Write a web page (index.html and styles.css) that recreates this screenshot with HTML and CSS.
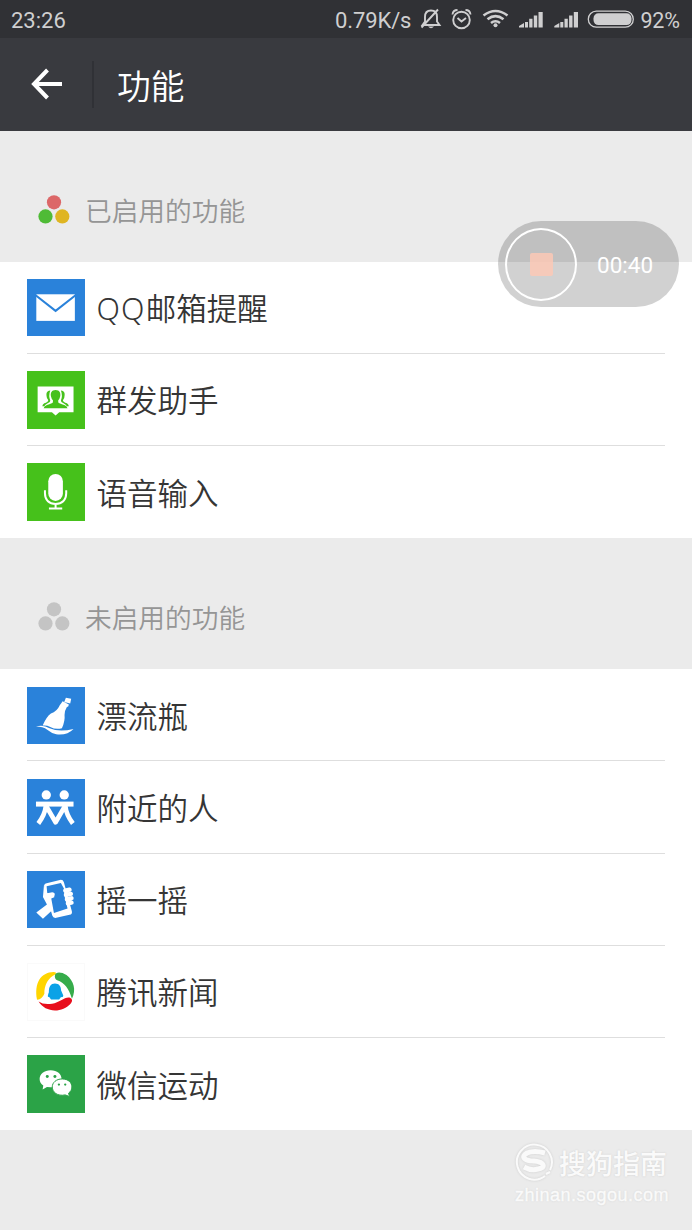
FILE: index.html
```html
<!DOCTYPE html>
<html lang="zh-CN">
<head>
<meta charset="utf-8">
<meta name="viewport" content="width=device-width">
<title>功能</title>
<link rel="stylesheet" href="styles.css">
</head>
<body>
<div class="screen">
  <div class="status-bar">
    <span class="clock">23:26</span>
    <span class="speed">0.79K/s</span>
    <svg class="status-icons" width="218" height="38" viewBox="0 0 218 38" fill="none" stroke="#cfcfd0" stroke-width="1.9">
      <path d="M9 24.500V17Q9 10.500 15 10.500T21 17V21.500L23.500 25H6.500L9 21.500M5.500 27.500L22 9.500"/>
      <path d="M12 26.500H18Q15 30 12 26.500Z" fill="#cfcfd0" stroke="none"/>
      <circle cx="45.500" cy="20" r="8.300"/>
      <path d="M41.500 18L45.500 21.500L50 18M36.500 14.500Q37 10 41.500 10M49.500 10Q54 10 54.500 14.500"/>
      <g stroke-width="2.600"><path d="M67.500 15.500Q79.500 6.500 91.500 15.500M71.500 19.300Q79.500 13 87.500 19.300M75 23Q79.500 19.500 84 23"/></g>
      <circle cx="79.500" cy="25.200" r="2" fill="#cfcfd0" stroke="none"/>
      <g fill="#cfcfd0" stroke="none">
        <path id="signal" d="M103 27.500V26L108 23V27.500ZM109 22H112V27.500H109ZM113.200 18.800H116.500V27.500H113.200ZM117.800 15.500H121.200V27.500H117.800ZM122.500 12H126.700V27.500H122.500Z"/>
        <use href="#signal" x="35.300"/>
        <rect x="177.500" y="13.300" width="38" height="11.800" rx="5"/>
      </g>
      <rect x="172.300" y="11.200" width="45" height="16" rx="8" stroke-width="1.300"/>
    </svg>
    <span class="percent">92%</span>
  </div>
  <header class="title-bar">
    <svg class="back" width="34" height="34" viewBox="0 0 34 34" fill="none" stroke="#fff" stroke-width="4"><path d="M17.500 3L4 17L17.500 31M4 17H32"/></svg>
    <span class="divider"></span>
    <h1>功能</h1>
  </header>

  <h2 class="section-title">
    <svg class="dots" width="32" height="30" viewBox="0 0 32 30"><circle cx="16" cy="7.300" r="7.100" fill="#dc6768"/><circle cx="7.500" cy="21.400" r="7.100" fill="#4fbb36"/><circle cx="24.300" cy="21.400" r="7.100" fill="#dfb522"/></svg>
    <span>已启用的功能</span>
  </h2>
  <ul class="list">
    <li class="row">
      <svg class="icon blue" viewBox="0 0 173 173"><rect x="28" y="46" width="116" height="80" fill="#fff"/><path d="M25 48L86 96L147 48" fill="none" stroke="#2a82da" stroke-width="6"/></svg>
      <span class="label"><span class="latin">QQ</span>邮箱提醒</span>
    </li>
    <li class="row">
      <svg class="icon green" viewBox="0 0 173 173"><path d="M32 47H140V124H97L86 134L75 124H32Z" fill="#fff"/>
        <g fill="#46c11b"><path d="M86 57C98 57 102 66 100 76Q98 85 94 88V94Q96 98 112 102Q120 105 122 112H50Q52 105 60 102Q76 98 78 94V88Q74 85 72 76C70 66 74 57 86 57Z"/><path d="M70 59C58 60 57 69 60 81L64 88Q63 94 52 97Q47 100 46 106H52Q54 101 62 97Q71 94 70 89Q64 75 70 59ZM102 59C114 60 115 69 112 81L108 88Q109 94 120 97Q125 100 126 106H120Q118 101 110 97Q101 94 102 89Q108 75 102 59Z"/></g></svg>
      <span class="label">群发助手</span>
    </li>
    <li class="row">
      <svg class="icon green" viewBox="0 0 173 173"><rect x="64" y="33" width="44" height="81" rx="22" fill="#fff"/><path d="M54 82V91C54 112 67 123 86 123S118 112 118 91V82M86 123V137M66 137H106" fill="none" stroke="#fff" stroke-width="6"/></svg>
      <span class="label">语音输入</span>
    </li>
  </ul>

  <h2 class="section-title">
    <svg class="dots" width="32" height="30" viewBox="0 0 32 30" fill="#c4c4c4"><circle cx="16" cy="7.300" r="7.100"/><circle cx="7.500" cy="21.400" r="7.100"/><circle cx="24.300" cy="21.400" r="7.100"/></svg>
    <span>未启用的功能</span>
  </h2>
  <ul class="list">
    <li class="row">
      <svg class="icon blue" viewBox="0 0 173 173" fill="#fff"><path d="M117 32L133 35L130 50L112 45ZM107 43L126 53L124 59L120 60Q112 73 113 84Q115 102 105 124Q86 129 70 120Q58 114 47 116Q59 89 72 80Q90 74 99 54L103 49Z"/><path d="M27 119Q48 112 68 124Q97 137 140 126Q121 146 88 142Q74 139 62 129Q47 119 27 119Z"/></svg>
      <span class="label">漂流瓶</span>
    </li>
    <li class="row">
      <svg class="icon blue" viewBox="0 0 173 173"><g fill="#fff"><circle cx="58" cy="48" r="14"/><circle cx="112" cy="48" r="14"/><rect x="27" y="68" width="113" height="15"/></g><path d="M34 134Q54 108 57 80L86 130L115 80Q118 108 138 134" stroke="#fff" stroke-width="14" stroke-linejoin="round" fill="none"/></svg>
      <span class="label">附近的人</span>
    </li>
    <li class="row">
      <svg class="icon blue" viewBox="0 0 173 173"><path d="M52 49Q49 40 59 37L99 27Q108 25 111 34L135 121Q137 130 128 132L88 141Q79 143 76 134Z" fill="#fff"/><path d="M59 46L102 36L111 53L113 76L122 113L81 126L73 83L82 79V71L61 67Z" fill="#2a82da"/><path d="M51 43L48 78L60 101L28 125L48 144L75 119L69 80L81 77Q88 65 76 64L61 67Z" fill="#fff"/><path d="M115 59L128 56M117 72L132 69M120 85L134 82M123 97L134 95" stroke="#fff" stroke-width="13" stroke-linecap="round"/></svg>
      <span class="label">摇一摇</span>
    </li>
    <li class="row">
      <svg class="icon news" viewBox="0 0 173 173"><path d="M28 111C19 60 39 26 80 25Q90 25 86 32C63 42 50 67 51 93Q43 112 28 111Z" fill="#ffd500"/><path d="M84 34C86 24 103 23 120 34C143 52 151 80 137 108C127 77 114 58 91 51Q82 46 84 34Z" fill="#36ac4b"/><path d="M33 117Q48 128 75 124C99 120 115 101 131 105Q142 111 134 122C105 155 53 151 33 117Z" fill="#e80e1c"/><path d="M84 61C97 61 103 70 103 82L110 98Q110 105 103 103L97 111H72L66 103Q58 105 65 88C65 70 71 61 84 61Z" fill="#0aa2e7"/></svg>
      <span class="label">腾讯新闻</span>
    </li>
    <li class="row">
      <svg class="icon wechat" viewBox="0 0 173 173"><path d="M71 46C91 46 104 58 104 72C104 88 90 97 71 97L60 96L47 104L49 92C42 87 38 80 38 72C38 58 52 46 71 46Z" fill="#fff"/><path d="M106 72C124 72 135 83 135 96C135 105 131 110 125 115L128 125L115 120C92 125 76 112 76 96C76 83 88 72 106 72Z" fill="#fff" stroke="#2ba347" stroke-width="3"/><g fill="#2ba347"><circle cx="61" cy="65" r="4.500"/><circle cx="84" cy="65" r="4.500"/><circle cx="96" cy="89" r="3.500"/><circle cx="115" cy="89" r="3.500"/></g></svg>
      <span class="label">微信运动</span>
    </li>
  </ul>

  <div class="recorder">
    <span class="stop-ring"><span class="stop"></span></span>
    <span class="elapsed">00:40</span>
  </div>

  <div class="watermark">
    <div class="brand">
      <svg width="39" height="39" viewBox="0 0 39 39" fill="none" stroke="#fafafa"><path d="M30 34A17.500 17.500 0 1 1 35 28M31 32L35 30" stroke-width="2"/><path d="M30 11Q19 8 12 11C5 15 10 19 19 19C30 20 31 26 23 27Q16 29 9 25" stroke-width="5"/></svg>
      <span>搜狗指南</span>
    </div>
    <div class="site">zhinan.sogou.com</div>
  </div>
</div>
</body>
</html>
```
FILE: styles.css
```css
* { box-sizing: border-box; }
body { margin: 0; background: #ebebeb; }
.screen {
  position: relative;
  width: 692px;
  height: 1230px;
  overflow: hidden;
  background: #ebebeb;
  font-family: "Noto Sans", "Noto Sans CJK SC", sans-serif;
}
.status-bar {
  display: flex;
  align-items: center;
  height: 38px;
  padding: 0 12px 0 11px;
  background: #303135;
  color: #cfcfd0;
  font: 22px/38px Roboto, sans-serif;
}
.clock, .speed, .percent { padding-top: 3px; white-space: nowrap; }
.speed { margin-left: auto; letter-spacing: -.1px; }
.status-icons { flex: none; margin: 0 6px 0 5px; }
.percent { font-size: 21.500px; letter-spacing: -.1px; }
.title-bar {
  display: flex;
  align-items: center;
  height: 92.600px;
  background: #393a3f;
  color: #fff;
}
.back { margin-left: 30px; }
.divider { width: 2px; height: 47px; margin-left: 28px; background: #303136; }
.title-bar h1 { margin: 0 0 0 23px; padding-top: 4px; font-size: 33.700px; font-weight: 350; line-height: 48px; }
.section-title {
  display: flex;
  align-items: center;
  height: 131px;
  margin: 0;
  padding: 27px 0 0 38px;
  color: #959595;
  font-size: 26.700px;
  font-weight: 350;
}
.section-title span { padding-bottom: 1px; }
.dots { flex: none; margin-right: 15px; }
.list { margin: 0; padding: 0; list-style: none; background: #fff; }
.row {
  position: relative;
  display: flex;
  align-items: center;
  height: 92.200px;
  padding-left: 27px;
  color: #353535;
  font-size: 30.500px;
  font-weight: 350;
}
.label { padding-bottom: 1px; }
.latin { font-weight: 350; letter-spacing: 1.200px; }
.row:not(:last-child)::after {
  content: "";
  position: absolute;
  right: 27px;
  bottom: 0;
  left: 27px;
  height: 1px;
  background: #dedede;
}
.icon { flex: none; width: 57.500px; height: 57.500px; margin-right: 12px; }
.blue { background: #2a82da; }
.green { background: #46c11b; }
.wechat { background: #2ba347; }
.news { background: #fff; border: 1px solid #fafafa; }
.recorder {
  position: absolute;
  top: 221px;
  left: 498px;
  display: flex;
  align-items: center;
  width: 181px;
  height: 86px;
  padding-left: 7px;
  border-radius: 43px;
  background: rgba(0, 0, 0, .18);
  color: #fff;
}
.stop-ring {
  display: flex;
  align-items: center;
  justify-content: center;
  width: 72px;
  height: 73px;
  border: 2px solid #fff;
  border-radius: 50%;
}
.stop { width: 23px; height: 23px; border-radius: 2px; background: rgba(255, 200, 180, .8); }
.elapsed { margin-left: 20px; padding-top: 2px; font: 22.500px/30px Roboto, sans-serif; }
.watermark {
  position: absolute;
  top: 1142px;
  left: 515px;
  color: #fafafa;
  text-shadow: 0 0 2px #ccc;
}
.brand { display: flex; align-items: center; gap: 5px; height: 39px; font-size: 27px; font-weight: 500; white-space: nowrap; }
.brand span { padding-top: 2px; }
.brand svg { filter: drop-shadow(0 0 1px #ccc); }
.site { margin-top: 3px; font: 18px/22px "Liberation Sans", sans-serif; letter-spacing: .5px; -webkit-text-stroke: .4px #fafafa; }
```
